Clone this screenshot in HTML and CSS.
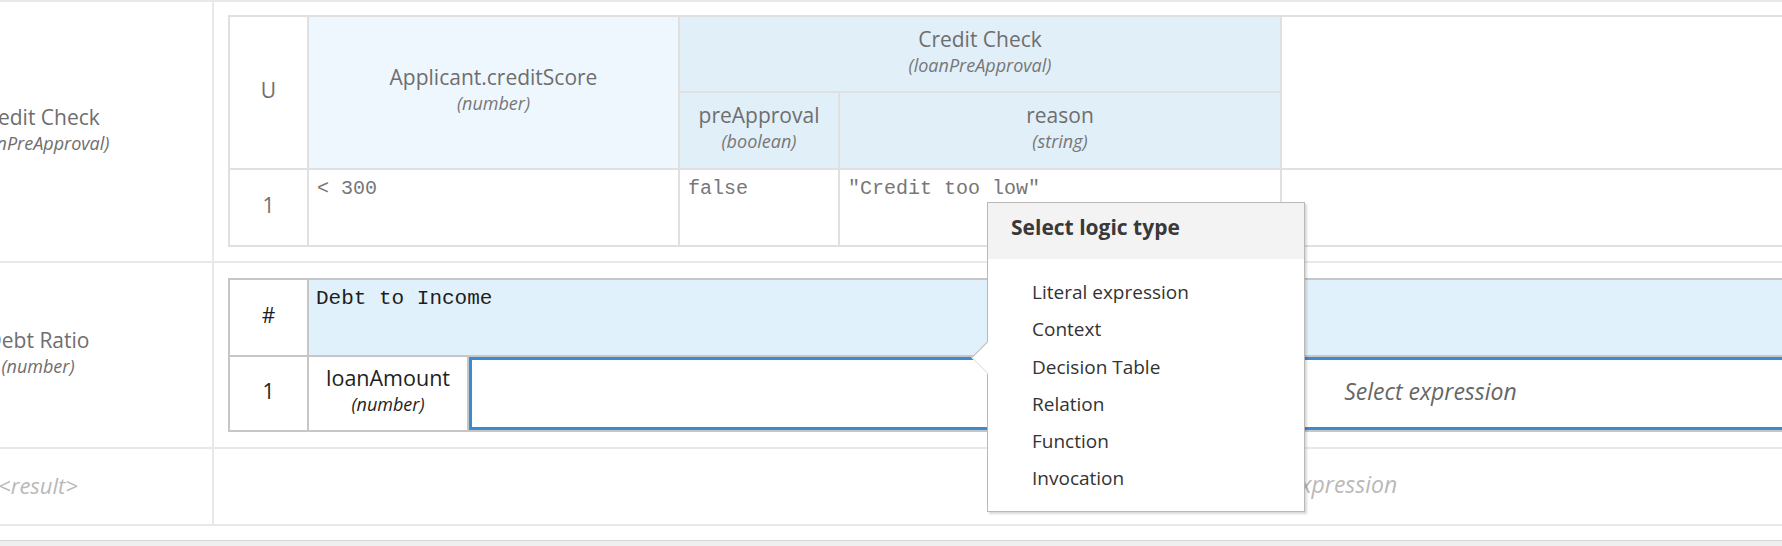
FILE: index.html
```html
<!DOCTYPE html>
<html>
<head>
<meta charset="utf-8">
<link rel="stylesheet" href="styles.css">
</head>
<body>
<div class="editor">
  <div class="row row-1">
    <div class="name-cell">
      <div class="name">Credit Check</div>
      <div class="type">(loanPreApproval)</div>
    </div>
    <div class="expr-cell">
      <div class="dt1">
        <div class="c hit">U</div>
        <div class="c in-h"><div class="h">Applicant.creditScore</div><div class="t">(number)</div></div>
        <div class="c out-h span-out"><div class="h">Credit Check</div><div class="t">(loanPreApproval)</div></div>
        <div class="c annot"><div class="h">Description</div></div>
        <div class="c out-h"><div class="h">preApproval</div><div class="t">(boolean)</div></div>
        <div class="c out-h"><div class="h">reason</div><div class="t">(string)</div></div>
        <div class="c num">1</div>
        <div class="c val">&lt; 300</div>
        <div class="c val">false</div>
        <div class="c val">"Credit too low"</div>
        <div class="c val"></div>
      </div>
    </div>
  </div>
  <div class="row row-2">
    <div class="name-cell">
      <div class="name">Debt Ratio</div>
      <div class="type">(number)</div>
    </div>
    <div class="expr-cell">
      <div class="dt2">
        <div class="c2 num2">#</div>
        <div class="c2 ctx-h">Debt to Income</div>
        <div class="c2 num2">1</div>
        <div class="c2 entry"><div class="h2">loanAmount</div><div class="t2">(number)</div></div>
        <div class="c2 selected">Select expression</div>
      </div>
    </div>
  </div>
  <div class="row row-result">
    <div class="name-cell">
      <div class="name ph">&lt;result&gt;</div>
    </div>
    <div class="expr-cell result-cell">
      <div class="ph">Select expression</div>
    </div>
  </div>
</div>
<div class="hscroll"></div>

<div class="popover">
  <div class="pop-title">Select logic type</div>
  <ul class="pop-list">
    <li>Literal expression</li>
    <li>Context</li>
    <li>Decision Table</li>
    <li>Relation</li>
    <li>Function</li>
    <li>Invocation</li>
  </ul>
</div>
</body>
</html>
```

FILE: styles.css
```css
* { box-sizing: border-box; }
html, body { margin: 0; padding: 0; }
body {
  width: 1782px;
  height: 546px;
  overflow: hidden;
  position: relative;
  background: #fff;
  font-family: "Open Sans", "Liberation Sans", sans-serif;
}

.editor {
  margin-left: -136px;
  width: 2544px;
  border-top: 2px solid #e8e8e8;
}
.row {
  display: grid;
  grid-template-columns: 350px 2194px;
  border-bottom: 2px solid #e8e8e8;
}
.name-cell {
  border-right: 2px solid #e8e8e8;
  display: flex;
  flex-direction: column;
  align-items: center;
  justify-content: center;
  padding-bottom: 4px;
  color: #6e6e6e;
}
.name { font-size: 21px; line-height: 26px; }
.type { font-size: 18px; line-height: 26px; font-style: italic; }
.ph { font-size: 22px; line-height: 26px; font-style: italic; color: #b9b9b9; }
.result-cell .ph { font-size: 23px; }

.row-1 .expr-cell { padding: 13px 14px 14px; }
.row-2 .expr-cell { padding: 15px 14px 15px; }
.row-result { height: 77px; }
.result-cell { display: flex; align-items: center; justify-content: center; padding-bottom: 5px; }

/* decision table */
.dt1 {
  width: 2166px;
  display: grid;
  grid-template-columns: 77px 369px 158px 440px 1110px;
  grid-template-rows: 74px 75px 75px;
  gap: 2px;
  padding: 2px;
  background: #e0e0e0;
}
.c {
  background: #fff;
  color: #6e6e6e;
  display: flex;
  flex-direction: column;
  align-items: center;
  justify-content: center;
  padding-bottom: 5px;
}
.hit { grid-row: 1 / 3; font-size: 21px; }
.in-h { grid-row: 1 / 3; background: #eff7fe; }
.out-h { background: #e1eff9; }
.span-out { grid-column: 3 / 5; }
.annot { grid-column: 5; grid-row: 1 / 3; }
.h { font-size: 21px; line-height: 26px; }
.t { font-size: 18px; line-height: 26px; font-style: italic; color: #777; }
.num { font-size: 21px; }
.val {
  align-items: flex-start;
  justify-content: flex-start;
  padding: 7px 8px;
  font-family: "Liberation Mono", "Courier New", monospace;
  font-size: 20px;
  line-height: 24px;
  color: #777;
}

/* context table */
.dt2 {
  width: 2166px;
  display: grid;
  grid-template-columns: 77px 158px 1923px;
  grid-template-rows: 75px 73px;
  gap: 2px;
  padding: 2px;
  background: #c6c6c6;
}
.c2 {
  background: #fff;
  color: #1e1e1e;
  display: flex;
  flex-direction: column;
  align-items: center;
  justify-content: center;
  padding-bottom: 5px;
}
.num2 { font-size: 21px; }
.ctx-h {
  grid-column: 2 / 4;
  background: #e1f1fb;
  align-items: flex-start;
  justify-content: flex-start;
  padding: 7px 7px;
  font-family: "Liberation Mono", "Courier New", monospace;
  font-size: 21px;
  line-height: 24px;
  color: #1e1e1e;
}
.h2 { font-size: 21.5px; line-height: 26px; }
.t2 { font-size: 18px; line-height: 26px; font-style: italic; }
.selected {
  border: 3px solid #3b8ad2;
  font-size: 23px;
  font-style: italic;
  color: #666;
}

.hscroll {
  margin-top: 14px;
  height: 20px;
  border-top: 1px solid #d6d6d6;
  background: #efefef;
}

/* popover */
.popover {
  position: absolute;
  left: 987px;
  top: 202px;
  width: 318px;
  height: 310px;
  background: #fff;
  border: 1px solid #b8b8b8;
  box-shadow: 2px 2px 2px rgba(0, 0, 0, 0.15);
}
.popover::before {
  content: "";
  position: absolute;
  left: -12px;
  top: 143px;
  width: 22px;
  height: 22px;
  background: #fff;
  border-left: 1px solid #b8b8b8;
  border-bottom: 1px solid #e2e2e2;
  transform: rotate(45deg);
}
.pop-title {
  height: 56px;
  background: #f3f3f3;
  display: flex;
  align-items: center;
  padding-left: 23px;
  padding-bottom: 9px;
  font-size: 21px;
  font-weight: 700;
  color: #393939;
}
.pop-list {
  list-style: none;
  margin: 0;
  padding: 15px 0 0 44px;
}
.pop-list li {
  font-size: 19px;
  line-height: 37.3px;
  color: #333;
}
```
